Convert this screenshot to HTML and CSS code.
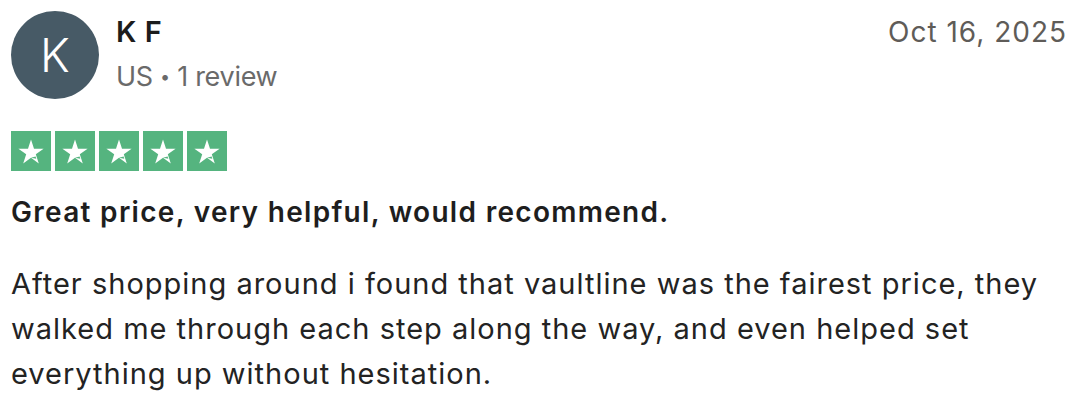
FILE: index.html
```html
<!DOCTYPE html>
<html>
<head>
<meta charset="utf-8">
<link rel="stylesheet" href="styles.css">
</head>
<body>
<article class="review">
  <header class="head">
    <div class="avatar">K</div>
    <div class="who">
      <div class="name">K F</div>
      <div class="meta">US <span class="dot">•</span> 1 review</div>
    </div>
    <time class="date">Oct 16, 2025</time>
  </header>
  <div class="stars">
    <span class="star"><svg viewBox="0 0 40 40"><path d="M20 8.5l3 9.2h9.6l-7.8 5.6 3 9.2-7.8-5.7-7.8 5.7 3-9.2-7.8-5.6H17z" fill="#fff"/><path d="M20 26.8l4.6-1.2 0.7 2.1z" fill="#55b47f"/></svg></span>
    <span class="star"><svg viewBox="0 0 40 40"><path d="M20 8.5l3 9.2h9.6l-7.8 5.6 3 9.2-7.8-5.7-7.8 5.7 3-9.2-7.8-5.6H17z" fill="#fff"/><path d="M20 26.8l4.6-1.2 0.7 2.1z" fill="#55b47f"/></svg></span>
    <span class="star"><svg viewBox="0 0 40 40"><path d="M20 8.5l3 9.2h9.6l-7.8 5.6 3 9.2-7.8-5.7-7.8 5.7 3-9.2-7.8-5.6H17z" fill="#fff"/><path d="M20 26.8l4.6-1.2 0.7 2.1z" fill="#55b47f"/></svg></span>
    <span class="star"><svg viewBox="0 0 40 40"><path d="M20 8.5l3 9.2h9.6l-7.8 5.6 3 9.2-7.8-5.7-7.8 5.7 3-9.2-7.8-5.6H17z" fill="#fff"/><path d="M20 26.8l4.6-1.2 0.7 2.1z" fill="#55b47f"/></svg></span>
    <span class="star"><svg viewBox="0 0 40 40"><path d="M20 8.5l3 9.2h9.6l-7.8 5.6 3 9.2-7.8-5.7-7.8 5.7 3-9.2-7.8-5.6H17z" fill="#fff"/><path d="M20 26.8l4.6-1.2 0.7 2.1z" fill="#55b47f"/></svg></span>
  </div>
  <h2 class="title">Great price, very helpful, would recommend.</h2>
  <p class="body">After shopping around i found that vaultline was the fairest price, they walked me through each step along the way, and even helped set everything up without hesitation.</p>
</article>
</body>
</html>
```
FILE: styles.css
```css
html, body {
  margin: 0;
  padding: 0;
  background: #ffffff;
}
body {
  font-family: Inter, "Liberation Sans", sans-serif;
  color: #1c1c1c;
}
.review {
  padding: 11px 11px 0 11px;
}
.head {
  display: flex;
  align-items: flex-start;
}
.avatar {
  width: 88px;
  height: 88px;
  border-radius: 50%;
  background: #475a66;
  color: #fff;
  font-size: 46px;
  font-weight: 300;
  display: flex;
  align-items: center;
  justify-content: center;
  flex-shrink: 0;
}
.who {
  margin-left: 17px;
  flex: 1;
}
.name {
  font-size: 29px;
  font-weight: 600;
  line-height: 36px;
  margin-top: 3px;
  letter-spacing: 0.5px;
}
.meta {
  font-size: 27px;
  color: #6a6a6a;
  line-height: 36px;
  margin-top: 9px;
  letter-spacing: -0.3px;
}
.dot {
  font-size: 18px;
  vertical-align: 3px;
}
.date {
  font-size: 28px;
  color: #5f5c58;
  line-height: 36px;
  margin-top: 3px;
  letter-spacing: 1px;
}
.stars {
  display: flex;
  gap: 4px;
  margin-top: 32px;
}
.star {
  width: 40px;
  height: 40px;
  background: #55b47f;
  display: block;
}
.star svg {
  width: 40px;
  height: 40px;
  display: block;
}
.title {
  font-size: 28px;
  font-weight: 600;
  line-height: 36px;
  margin: 23px 0 0 0;
  letter-spacing: 1.3px;
  color: #1e1e1e;
}
.body {
  font-size: 29px;
  line-height: 45px;
  margin: 31px 0 0 0;
  letter-spacing: 1px;
  color: #232323;
}
```
